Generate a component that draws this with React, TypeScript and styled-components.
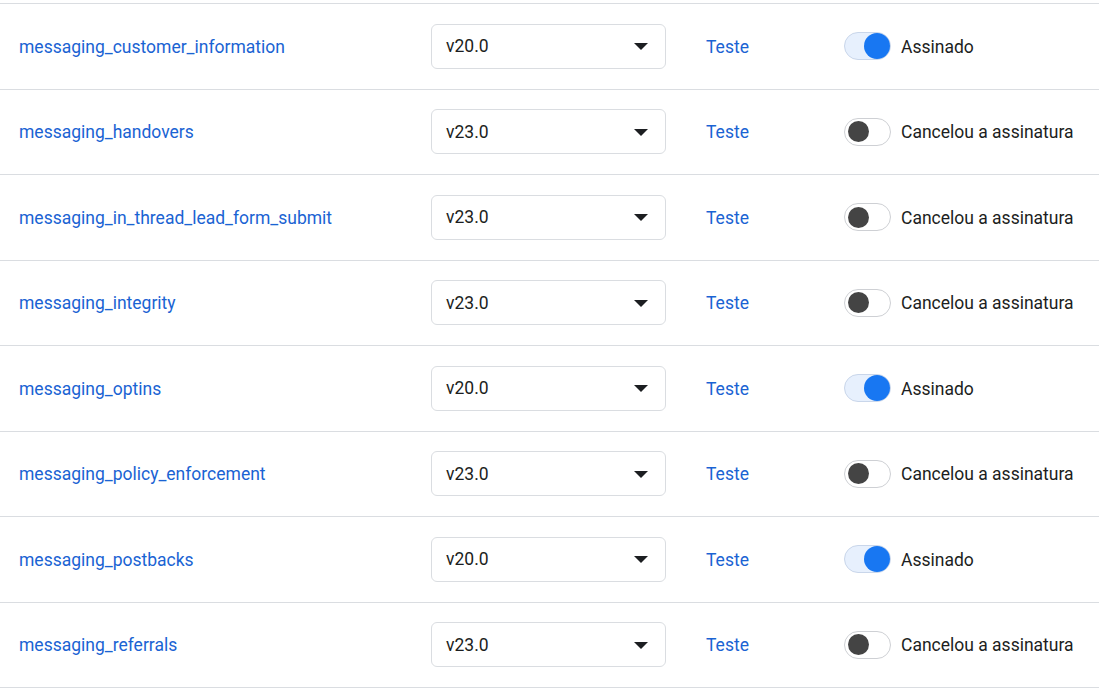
import React from "react";
import styled, { createGlobalStyle } from "styled-components";

const Global = createGlobalStyle`
  html, body { margin: 0; padding: 0; background: #fff; }
  body { font-family: Roboto, "Liberation Sans", Arial, sans-serif; }
`;

const List = styled.div`
  width: 1099px;
  margin-top: 3px;
  border-top: 1px solid #dadde1;
`;

const Row = styled.div`
  box-sizing: border-box;
  height: 85.5px;
  border-bottom: 1px solid #dadde1;
  display: grid;
  grid-template-columns: 412px 235px 40px 138px 1fr;
  align-items: center;
  padding-left: 19px;
  padding-top: 1px;
`;

const Name = styled.a`
  font-size: 17.5px;
  color: #1a63d3;
  text-decoration: none;
  white-space: nowrap;
`;

const Select = styled.div`
  box-sizing: border-box;
  height: 45px;
  margin-top: -1px;
  border: 1px solid #dadde1;
  border-radius: 6px;
  display: flex;
  align-items: center;
  justify-content: space-between;
  padding: 0 17px 0 14px;
  font-size: 17.5px;
  color: #1c1e21;
`;

const Caret = styled.span`
  width: 0;
  height: 0;
  border-left: 7px solid transparent;
  border-right: 7px solid transparent;
  border-top: 7px solid #1c1e21;
  margin-top: 1px;
`;

const TestLink = styled.a`
  grid-column: 4;
  font-size: 17.5px;
  color: #1a63d3;
  text-decoration: none;
`;

const ToggleCell = styled.div`
  display: flex;
  align-items: center;
  gap: 10px;
  font-size: 17.5px;
  color: #1c1e21;
  white-space: nowrap;
`;

const Track = styled.span<{ $on: boolean }>`
  box-sizing: border-box;
  width: 47px;
  height: 28px;
  margin-top: -1px;
  border-radius: 14px;
  border: 1px solid ${(p) => (p.$on ? "#c9d6ea" : "#ced0d4")};
  background: ${(p) => (p.$on ? "#e7f0fd" : "#fff")};
  display: flex;
  align-items: center;
  justify-content: ${(p) => (p.$on ? "flex-end" : "flex-start")};
  padding: ${(p) => (p.$on ? "0" : "0 3px")};
`;

const Knob = styled.span<{ $on: boolean }>`
  width: ${(p) => (p.$on ? "26px" : "21px")};
  height: ${(p) => (p.$on ? "26px" : "21px")};
  border-radius: 50%;
  background: ${(p) => (p.$on ? "#1877f2" : "#444444")};
`;

const rows = [
  { name: "messaging_customer_information", v: "v20.0", on: true },
  { name: "messaging_handovers", v: "v23.0", on: false },
  { name: "messaging_in_thread_lead_form_submit", v: "v23.0", on: false },
  { name: "messaging_integrity", v: "v23.0", on: false },
  { name: "messaging_optins", v: "v20.0", on: true },
  { name: "messaging_policy_enforcement", v: "v23.0", on: false },
  { name: "messaging_postbacks", v: "v20.0", on: true },
  { name: "messaging_referrals", v: "v23.0", on: false },
];

export default function App() {
  return (
    <>
      <Global />
      <List>
        {rows.map((r) => (
          <Row key={r.name}>
            <Name href="#">{r.name}</Name>
            <Select>
              <span>{r.v}</span>
              <Caret />
            </Select>
            <TestLink href="#">Teste</TestLink>
            <ToggleCell>
              <Track $on={r.on}>
                <Knob $on={r.on} />
              </Track>
              <span>{r.on ? "Assinado" : "Cancelou a assinatura"}</span>
            </ToggleCell>
          </Row>
        ))}
      </List>
    </>
  );
}
